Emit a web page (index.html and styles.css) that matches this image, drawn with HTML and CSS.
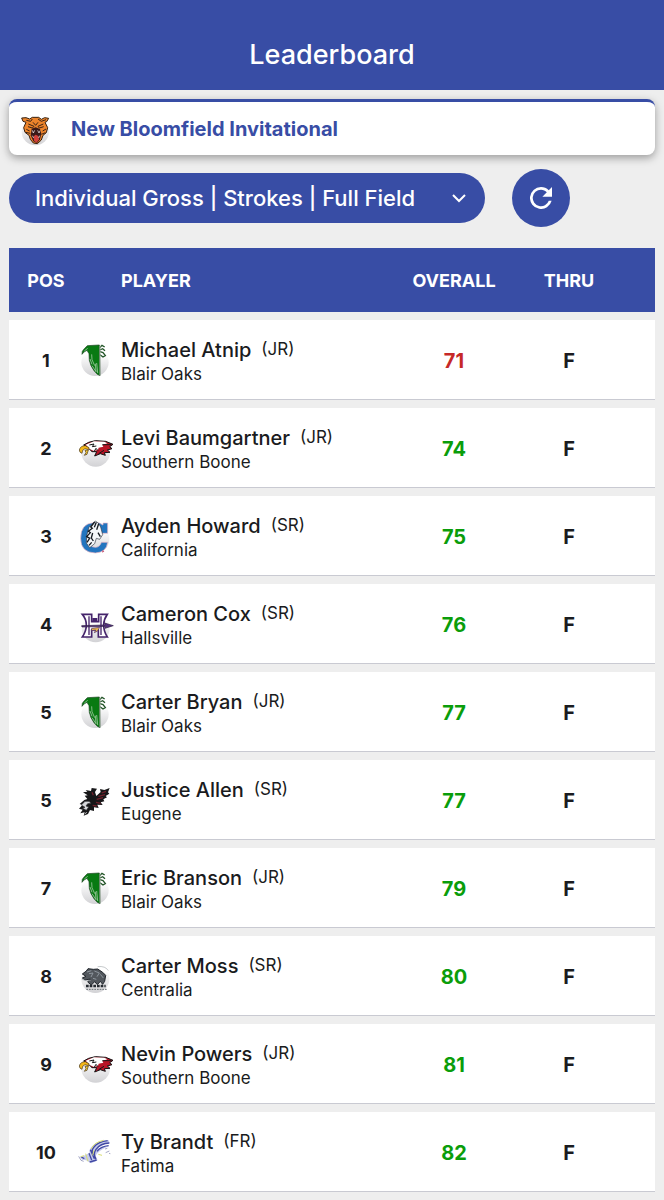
FILE: index.html
```
<!DOCTYPE html>
<html lang="en">
<head>
    <meta charset="UTF-8">
    <meta name="viewport" content="width=device-width, initial-scale=1.0">
    <title>Leaderboard</title>
    <link rel="stylesheet" href="styles.css">
</head>
<body>
    <!-- Team logos, reused by the rows -->
    <svg class="sprites" aria-hidden="true">
        <defs>
            <linearGradient id="ball" x1="0" y1="0" x2="0" y2="1">
                <stop offset="0.2" stop-color="#ffffff"/>
                <stop offset="1" stop-color="#d2d2d5"/>
            </linearGradient>
        </defs>
        <symbol id="blair-oaks" viewBox="15 30 120 120">
            <circle cx="75" cy="94" r="41" fill="url(#ball)"/>
            <path d="M52 44 L88 42 L90 134 L82 130 L72 119 L63 104 L58 88 L57 68 L51 58 L42 63 L36 70 L37 61 L43 53 Z" fill="#087a12" stroke="#173f1b" stroke-width="2"/>
            <path d="M89 50 L96 43 L104 48 M89 57 L98 53 L105 59 M90 62 L99 65 L106 74 L99 78 L90 71" fill="none" stroke="#235528" stroke-width="4"/>
            <path d="M43 60 L53 52 M60 84 L66 100 M65 70 L66 86 L74 104 M66 104 L78 122 L76 98 M83 126 L80 96" fill="none" stroke="#c4dcc2" stroke-width="2"/>
            <path d="M90 44 V134" stroke="#9aaa9a" stroke-width="3"/>
        </symbol>
        <symbol id="southern-boone" viewBox="15 24 120 120">
            <circle cx="77" cy="94" r="43" fill="url(#ball)"/>
            <path d="M41 72 L56 64 L76 59 L107 61 L129 70 L119 77 L126 83 L112 87 L120 94 L103 95 L106 103 L91 98 L74 105 L80 92 L66 92 L56 82 Z" fill="#b91527" stroke="#111111" stroke-width="3"/>
            <path d="M47 71 L72 61 L103 62 L112 67 L97 72 L100 77 L86 80 L84 86 L72 90 L59 84 Z" fill="#ffffff"/>
            <path d="M58 72 L72 69 L67 77 L79 75 M72 92 L78 82 L84 89 M97 71 L124 71 M86 98 L102 88" fill="none" stroke="#161616" stroke-width="3"/>
            <path d="M28 87 Q31 74 46 74 L57 80 L56 86 L45 83 Q36 85 36 97 Q28 95 28 87 Z" fill="#f4b719" stroke="#463313" stroke-width="2"/>
            <path d="M45 88 L55 87 L51 100 L43 103 L48 95 Z" fill="#f7c933" stroke="#463313" stroke-width="2"/>
        </symbol>
        <symbol id="california" viewBox="15 24 120 120">
            <circle cx="76" cy="90" r="42" fill="url(#ball)"/>
            <path d="M113 42 V73 H94 Q90 56 74 57 Q56 61 56 88 Q57 116 77 115 Q90 114 94 100 H113 Q110 130 76 132 Q32 131 32 88 Q32 43 71 41 Q89 39 99 48 V42 Z" fill="#2375bf" stroke="#efb8c6" stroke-width="2"/>
            <path d="M76 36 L85 42 L92 54 L98 77 L89 91 L79 88 L74 104 L59 116 L49 102 L50 80 L57 55 Z" fill="#f5f7fa" stroke="#303844" stroke-width="2"/>
            <path d="M74 39 L62 54 L67 58 L55 67 L61 71 L50 83 L59 88 L51 100 M79 40 L73 55 M86 44 L80 62 M68 72 L64 87 L70 96 M84 71 L91 83 M57 109 L65 100" fill="none" stroke="#161b22" stroke-width="4"/>
            <path d="M97 124 L103 127 L97 131 Z" fill="#c24462"/>
        </symbol>
        <symbol id="hallsville" viewBox="15 24 120 120">
            <circle cx="77" cy="94" r="42" fill="url(#ball)"/>
            <path d="M37 52 H65 V74 H86 V52 H112 Q101 68 101 84 Q101 103 112 120 H85 V99 H65 V120 H37 Q49 102 49 84 Q49 66 37 52 Z" fill="#ffffff" stroke="#45246b" stroke-width="5"/>
            <path d="M57 58 V114 M93 58 V114" stroke="#45246b" stroke-width="4"/>
            <path d="M35 86 L106 84 L104 78 L130 86 L105 94 L107 88 L36 90 Z" fill="#55317f" stroke="#28183e" stroke-width="2"/>
            <path d="M65 94 L89 91 L83 102 L73 107 L77 99 L64 101 Z" fill="#e7b84e" stroke="#45246b" stroke-width="2"/>
            <path d="M67 63 H82 V75 H67 Z" fill="#45246b"/>
        </symbol>
        <symbol id="eugene" viewBox="15 27 120 120">
            <path d="M39 61 L52 59 L47 54 L63 57 L65 48 L81 50 L75 60 L79 72 L92 60 L90 51 L103 54 L119 48 L114 61 L118 65 L107 72 L111 76 L100 82 L103 88 L92 91 L98 99 L82 98 L86 108 L72 106 L72 117 L60 114 L54 126 L41 131 L44 121 L31 124 L38 113 L27 110 L37 99 L29 96 L43 84 L52 81 L44 71 L53 70 Z" fill="#171719"/>
            <path d="M66 61 L70 70 M95 63 L108 58 M85 73 L105 68 M80 82 L99 77 M78 91 L92 94 M68 100 L80 102" fill="none" stroke="#70212b" stroke-width="4"/>
            <path d="M34 99 L45 88 L57 88 L63 94 L53 95 L48 102 L56 105 L49 115 L38 109 L45 106 Z" fill="#d8d9dc" stroke="#303034" stroke-width="2"/>
            <path d="M50 120 L45 127" stroke="#ffffff" stroke-width="2"/>
        </symbol>
        <symbol id="centralia" viewBox="15 24 120 120">
            <circle cx="76" cy="90" r="42" fill="url(#ball)"/>
            <path d="M37 75 L49 66 L54 59 L70 61 L83 60 L98 70 L107 79 L104 97 L98 106 L91 97 L82 107 L74 98 L64 108 L53 99 L61 90 L45 93 L37 87 L48 82 Z" fill="#52575d" stroke="#20252b" stroke-width="3"/>
            <path d="M51 69 L64 65 M57 74 L69 72 L63 84 M73 66 L88 72 L81 83 M91 76 L100 87 M69 88 L79 91" fill="none" stroke="#8e969e" stroke-width="3"/>
            <path d="M35 91 Q51 98 62 94 M83 53 Q106 50 115 65" fill="none" stroke="#a8adb0" stroke-width="2"/>
            <path d="M48 111 H107" stroke="#252a30" stroke-width="7" stroke-dasharray="8 3"/>
            <path d="M49 121 H110" stroke="#666b71" stroke-width="3" stroke-dasharray="5 3"/>
        </symbol>
        <symbol id="fatima" viewBox="15 27 120 120">
            <path d="M116 49 Q82 49 67 66 Q57 75 58 87 L42 95 L29 98 L36 107 L48 109 L64 118 L83 109 L77 97 Q79 83 117 66 Q98 66 83 75 Q91 61 119 57 Z" fill="#c6cbec"/>
            <path d="M113 50 Q83 54 72 69 Q62 80 70 93 M118 57 Q91 58 78 76 Q68 91 78 105 M116 65 Q93 67 81 82 M61 77 L73 104 M57 88 L65 108 M34 99 L43 104 M59 114 L80 108" fill="none" stroke="#4149a4" stroke-width="4"/>
            <path d="M101 49 Q71 55 64 75 M47 89 L54 112 M32 98 L42 95 M72 78 L68 94 M85 91 L96 94" fill="none" stroke="#d7dd72" stroke-width="3"/>
            <path d="M26 97 L33 109 L41 112 M105 75 L112 73 M107 86 L118 81 M117 88 L121 89" fill="none" stroke="#777ba9" stroke-width="2"/>
        </symbol>
        <symbol id="new-bloomfield" viewBox="21 18 108 108">
            <circle cx="76" cy="80" r="41" fill="url(#ball)"/>
            <path d="M35 39 L48 38 L59 42 L67 37 H86 L94 43 L104 38 L116 40 L110 50 L105 52 L113 68 L109 83 L99 91 L94 105 L82 116 L70 114 L61 103 L57 91 L45 82 L41 68 L48 52 L39 49 Z" fill="#ed842b" stroke="#35200f" stroke-width="3"/>
            <path d="M49 46 L62 49 L67 42 M84 42 L94 49 L108 44 M55 57 L72 64 L67 69 L54 65 M100 57 L84 64 L88 69 L101 65 M69 52 L77 61 L84 52 M49 73 L59 78 M108 72 L98 78 M47 82 L61 85 M106 83 L94 88" fill="none" stroke="#3d2415" stroke-width="3"/>
            <path d="M65 71 L77 67 L90 72 L94 86 L90 103 L81 115 L70 109 L62 91 Z" fill="#391a18"/>
            <path d="M71 94 L77 89 L85 93 L87 103 L80 113 L72 107 Z" fill="#d2403a"/>
            <path d="M67 76 L70 84 L74 76 M83 76 L87 84 L90 77 M67 92 L71 99 M89 92 L86 99" fill="none" stroke="#ffffff" stroke-width="2"/>
        </symbol>
    </svg>

    <header class="app-bar">
        <h1>Leaderboard</h1>
    </header>

    <main class="content">
        <section class="event-card">
            <svg class="event-logo" aria-hidden="true"><use href="#new-bloomfield"/></svg>
            <h2>New Bloomfield Invitational</h2>
        </section>

        <div class="toolbar">
            <div class="picker">
                <select id="board" aria-label="Leaderboard type">
                    <option>Individual Gross | Strokes | Full Field</option>
                </select>
                <svg class="chevron" viewBox="0 0 14 14" aria-hidden="true"><path d="M1 4 L7 10 L13 4" fill="none" stroke="#fff" stroke-width="2"/></svg>
            </div>
            <button class="refresh" type="button" aria-label="Refresh">
                <svg viewBox="4 4 16 16" aria-hidden="true"><path d="M17.65 6.35A7.96 7.96 0 0 0 12 4a8 8 0 1 0 7.73 10h-2.08A6 6 0 1 1 12 6c1.66 0 3.14.69 4.22 1.78L13 11h7V4z" fill="#fff"/></svg>
            </button>
        </div>

        <table class="board">
            <thead>
                <tr>
                    <th class="pos">POS</th>
                    <th class="player">PLAYER</th>
                    <th class="overall">OVERALL</th>
                    <th class="thru">THRU</th>
                </tr>
            </thead>
            <tbody>
                <tr>
                    <td class="pos">1</td>
                    <td><div class="player-cell"><svg class="logo" aria-hidden="true"><use href="#blair-oaks"/></svg><div><div class="name">Michael Atnip <span class="grade">(JR)</span></div><div class="school">Blair Oaks</div></div></div></td>
                    <td class="overall under">71</td>
                    <td class="thru">F</td>
                </tr>
                <tr>
                    <td class="pos">2</td>
                    <td><div class="player-cell"><svg class="logo" aria-hidden="true"><use href="#southern-boone"/></svg><div><div class="name">Levi Baumgartner <span class="grade">(JR)</span></div><div class="school">Southern Boone</div></div></div></td>
                    <td class="overall">74</td>
                    <td class="thru">F</td>
                </tr>
                <tr>
                    <td class="pos">3</td>
                    <td><div class="player-cell"><svg class="logo" aria-hidden="true"><use href="#california"/></svg><div><div class="name">Ayden Howard <span class="grade">(SR)</span></div><div class="school">California</div></div></div></td>
                    <td class="overall">75</td>
                    <td class="thru">F</td>
                </tr>
                <tr>
                    <td class="pos">4</td>
                    <td><div class="player-cell"><svg class="logo" aria-hidden="true"><use href="#hallsville"/></svg><div><div class="name">Cameron Cox <span class="grade">(SR)</span></div><div class="school">Hallsville</div></div></div></td>
                    <td class="overall">76</td>
                    <td class="thru">F</td>
                </tr>
                <tr>
                    <td class="pos">5</td>
                    <td><div class="player-cell"><svg class="logo" aria-hidden="true"><use href="#blair-oaks"/></svg><div><div class="name">Carter Bryan <span class="grade">(JR)</span></div><div class="school">Blair Oaks</div></div></div></td>
                    <td class="overall">77</td>
                    <td class="thru">F</td>
                </tr>
                <tr>
                    <td class="pos">5</td>
                    <td><div class="player-cell"><svg class="logo" aria-hidden="true"><use href="#eugene"/></svg><div><div class="name">Justice Allen <span class="grade">(SR)</span></div><div class="school">Eugene</div></div></div></td>
                    <td class="overall">77</td>
                    <td class="thru">F</td>
                </tr>
                <tr>
                    <td class="pos">7</td>
                    <td><div class="player-cell"><svg class="logo" aria-hidden="true"><use href="#blair-oaks"/></svg><div><div class="name">Eric Branson <span class="grade">(JR)</span></div><div class="school">Blair Oaks</div></div></div></td>
                    <td class="overall">79</td>
                    <td class="thru">F</td>
                </tr>
                <tr>
                    <td class="pos">8</td>
                    <td><div class="player-cell"><svg class="logo" aria-hidden="true"><use href="#centralia"/></svg><div><div class="name">Carter Moss <span class="grade">(SR)</span></div><div class="school">Centralia</div></div></div></td>
                    <td class="overall">80</td>
                    <td class="thru">F</td>
                </tr>
                <tr>
                    <td class="pos">9</td>
                    <td><div class="player-cell"><svg class="logo" aria-hidden="true"><use href="#southern-boone"/></svg><div><div class="name">Nevin Powers <span class="grade">(JR)</span></div><div class="school">Southern Boone</div></div></div></td>
                    <td class="overall">81</td>
                    <td class="thru">F</td>
                </tr>
                <tr>
                    <td class="pos">10</td>
                    <td><div class="player-cell"><svg class="logo" aria-hidden="true"><use href="#fatima"/></svg><div><div class="name">Ty Brandt <span class="grade">(FR)</span></div><div class="school">Fatima</div></div></div></td>
                    <td class="overall">82</td>
                    <td class="thru">F</td>
                </tr>
            </tbody>
        </table>
    </main>
</body>
</html>
```
FILE: styles.css
```
* {
    box-sizing: border-box;
}
body {
    margin: 0;
    background: #eeeeee;
    color: #1a1b20;
    font-family: Inter, sans-serif;
}
.sprites {
    display: block;
    width: 0;
    height: 0;
}
.app-bar {
    background: #384da5;
    color: #ffffff;
    padding: 37px 16px 17px;
    text-align: center;
}
.app-bar h1 {
    margin: 0;
    font-size: 27px;
    line-height: 36px;
    font-weight: 500;
}
.content {
    padding: 9px 9px 0;
}

/* Event title */
.event-card {
    display: flex;
    align-items: center;
    gap: 18px;
    height: 56px;
    padding: 0 8px;
    background: #ffffff;
    border-top: 3px solid #384da5;
    border-radius: 8px;
    box-shadow: 0 3px 8px rgba(0, 0, 0, 0.35);
}
.event-logo {
    width: 36px;
    height: 36px;
}
.event-card h2 {
    margin: 0;
    color: #384da5;
    font-size: 20px;
    line-height: 24px;
    font-weight: 700;
}

/* Board picker and refresh */
.toolbar {
    display: flex;
    align-items: center;
    gap: 27px;
    padding: 14px 0 21px;
}
.picker {
    position: relative;
}
.picker select {
    appearance: none;
    height: 50px;
    padding: 0 69px 0 26px;
    border: none;
    border-radius: 25px;
    background: #384da5;
    color: #ffffff;
    font-family: inherit;
    font-size: 22px;
    font-weight: 500;
    cursor: pointer;
}
.chevron {
    position: absolute;
    top: 18px;
    right: 19px;
    width: 14px;
    height: 14px;
    pointer-events: none;
}
.refresh {
    display: flex;
    align-items: center;
    justify-content: center;
    width: 58px;
    height: 58px;
    padding: 0;
    border: none;
    border-radius: 50%;
    background: #384da5;
    cursor: pointer;
}
.refresh svg {
    width: 22px;
    height: 22px;
}

/* Leaderboard */
.board {
    width: 100%;
    table-layout: fixed;
    border-collapse: separate;
    border-spacing: 0 8px;
    margin-top: -8px;
}
.board th,
.board td {
    padding: 0;
    text-align: center;
}
.board th {
    height: 64px;
    background: #384da5;
    color: #ffffff;
    font-size: 18px;
    font-weight: 700;
}
.board td {
    height: 80px;
    padding-top: 2px;
    background: #ffffff;
    border-bottom: 1px solid #c9cad2;
}
.board .pos {
    width: 66px;
    padding-left: 8px;
    font-size: 18px;
    font-weight: 700;
}
.board th.player {
    padding-left: 46px;
    text-align: left;
}
.board .overall {
    width: 114px;
}
.board .thru {
    width: 144px;
    padding-right: 28px;
}
.board td.overall,
.board td.thru {
    font-size: 20px;
    font-weight: 700;
}
.board td.overall {
    color: #0a9d0a;
}
.board td.under {
    color: #c62828;
}
.player-cell {
    display: flex;
    align-items: center;
    gap: 6px;
    text-align: left;
    white-space: nowrap;
}
.logo {
    flex: none;
    width: 40px;
    height: 40px;
}
.name {
    display: flex;
    gap: 10px;
    font-size: 20px;
    line-height: 26px;
    font-weight: 500;
}
.grade {
    font-size: 17px;
    line-height: 24px;
    font-weight: 400;
}
.school {
    font-size: 17px;
    line-height: 22px;
}
```
